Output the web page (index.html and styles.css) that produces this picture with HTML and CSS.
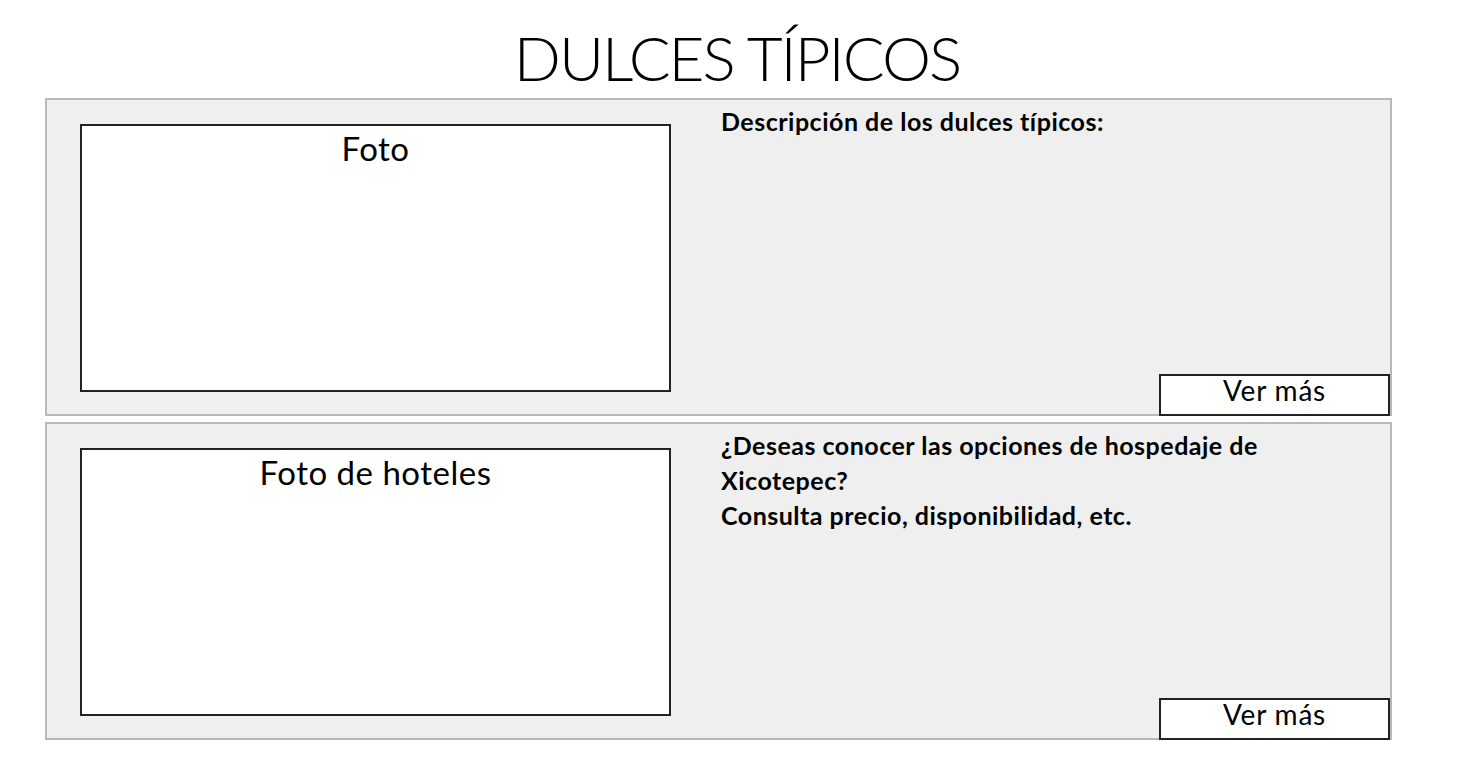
FILE: index.html
```html
<!DOCTYPE html>
<html lang="es">
<head>
<meta charset="utf-8">
<title>Dulces típicos</title>
<link rel="stylesheet" href="styles.css">
</head>
<body>
<h1 class="title">DULCES TÍPICOS</h1>
<main class="panels">
  <section class="panel">
    <div class="photo"><span class="photo-label">Foto</span></div>
    <div class="info">
      <p class="info-text">Descripción de los dulces típicos:</p>
      <button class="more">Ver más</button>
    </div>
  </section>
  <section class="panel">
    <div class="photo"><span class="photo-label">Foto de hoteles</span></div>
    <div class="info">
      <p class="info-text">¿Deseas conocer las opciones de hospedaje de<br>Xicotepec?<br>Consulta precio, disponibilidad, etc.</p>
      <button class="more">Ver más</button>
    </div>
  </section>
</main>
</body>
</html>
```

FILE: styles.css
```css
* { box-sizing: border-box; }
html, body { margin: 0; padding: 0; background: #fff; }
body { font-family: Lato, "Open Sans", sans-serif; color: #000; width: 1460px; height: 777px; overflow: hidden; }

.title {
  margin: 0;
  padding: 25px 0 0 14px;
  height: 98px;
  font-weight: 300;
  font-size: 62px;
  line-height: 64px;
  letter-spacing: -2px;
  text-align: center;
}

.panels {
  display: flex;
  flex-direction: column;
  gap: 6px;
  margin-left: 45px;
  width: 1347px;
}

.panel {
  display: flex;
  height: 318px;
  border: 2px solid #b8b8b8;
  background: #efefef;
  padding: 4px 0 0 33px;
}

.photo {
  flex: none;
  width: 591px;
  height: 268px;
  margin-top: 20px;
  background: #fff;
  border: 2px solid #222;
  text-align: center;
  padding-top: 6px;
}
.photo-label {
  font-size: 33px;
  line-height: 33px;
  letter-spacing: 0.5px;
}

.info {
  flex: 1;
  display: flex;
  flex-direction: column;
  align-items: flex-end;
  margin-left: 50px;
}
.info-text {
  align-self: stretch;
  margin: 0;
  font-weight: 700;
  font-size: 25px;
  line-height: 35px;
  letter-spacing: 0.5px;
}

.more {
  margin-top: auto;
  margin-bottom: -2px;
  width: 231px;
  height: 42px;
  background: #fff;
  border: 2px solid #222;
  font-family: inherit;
  font-size: 28px;
  line-height: 28px;
  letter-spacing: 0.8px;
  padding: 0 0 12px 0;
  color: #000;
  text-align: center;
}
```
